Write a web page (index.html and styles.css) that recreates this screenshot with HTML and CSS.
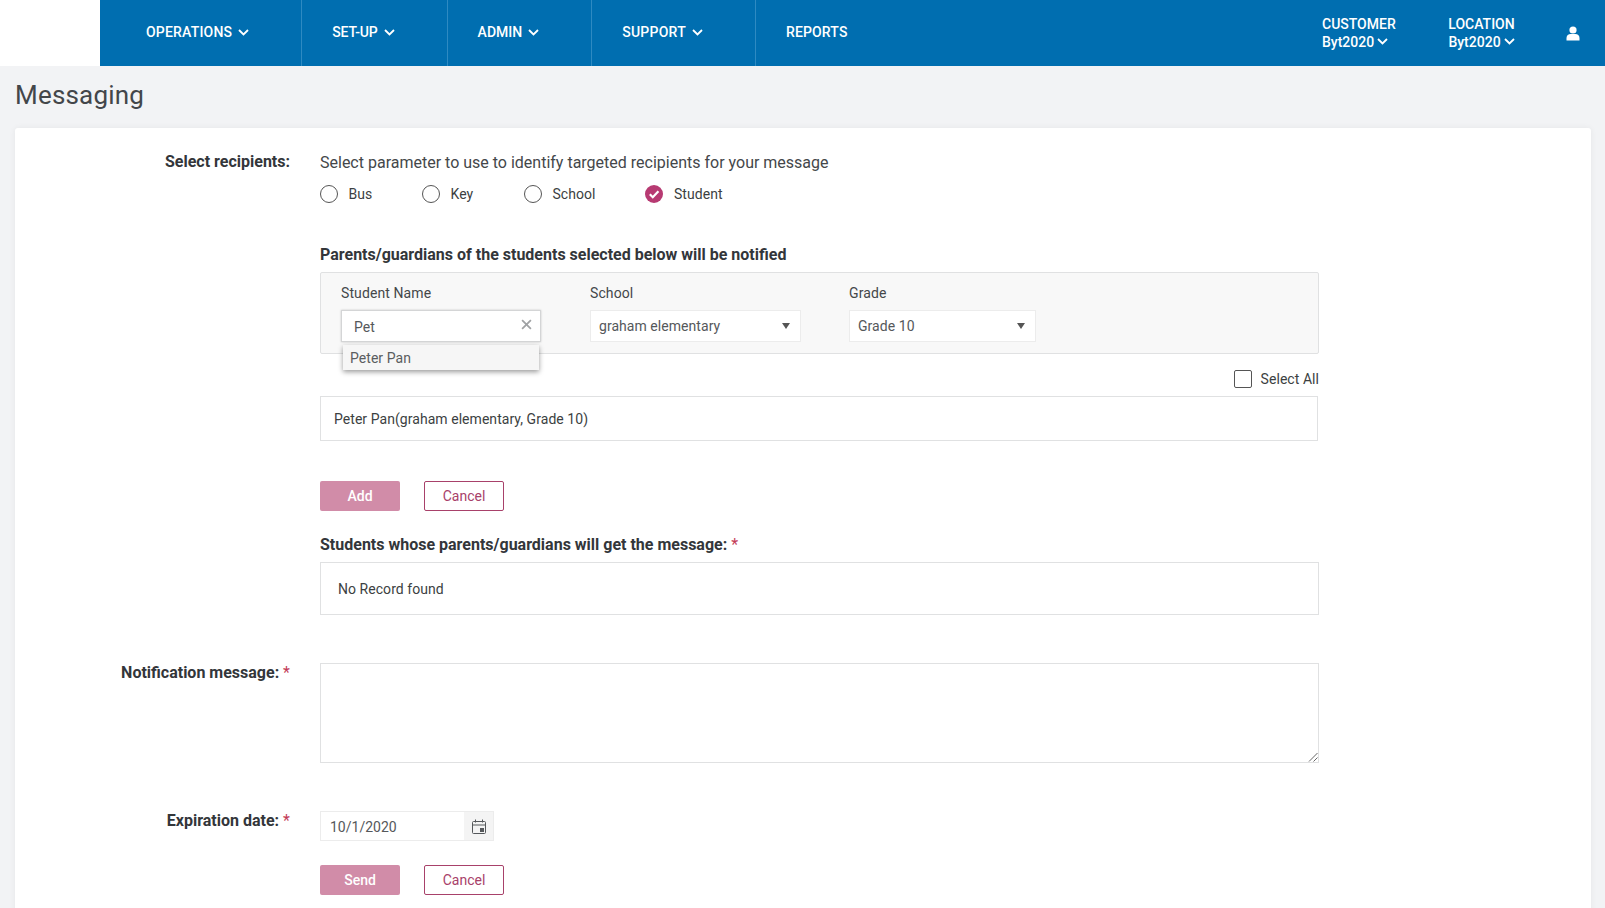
FILE: index.html
```html
<!DOCTYPE html>
<html lang="en">
<head>
<meta charset="utf-8">
<title>Messaging</title>
<link rel="stylesheet" href="styles.css">
</head>
<body>
<header class="topbar">
  <div class="logo"></div>
  <nav class="nav">
    <a class="nav-item nav-first">OPERATIONS<svg class="chev" viewBox="0 0 11 7"><path d="M1 1l4.500 4.500L10 1"/></svg></a>
    <a class="nav-item nav-setup">SET-UP<svg class="chev" viewBox="0 0 11 7"><path d="M1 1l4.500 4.500L10 1"/></svg></a>
    <a class="nav-item">ADMIN<svg class="chev" viewBox="0 0 11 7"><path d="M1 1l4.500 4.500L10 1"/></svg></a>
    <a class="nav-item nav-support">SUPPORT<svg class="chev" viewBox="0 0 11 7"><path d="M1 1l4.500 4.500L10 1"/></svg></a>
    <a class="nav-item nav-last">REPORTS</a>
  </nav>
  <div class="context">
    <div class="ctx ctx-customer"><span>CUSTOMER</span><span class="ctx-val">Byt2020<svg class="chev chev-near" viewBox="0 0 11 7"><path d="M1 1l4.500 4.500L10 1"/></svg></span></div>
    <div class="ctx ctx-location"><span>LOCATION</span><span class="ctx-val">Byt2020<svg class="chev chev-near" viewBox="0 0 11 7"><path d="M1 1l4.500 4.500L10 1"/></svg></span></div>
    <svg class="user" viewBox="0 0 14 15"><circle cx="7" cy="4" r="3.600"/><path d="M0.500 14.500v-2.500c0-2.600 2-4 4-4h5c2 0 4 1.400 4 4v2.500z"/></svg>
  </div>
</header>

<main class="page">
  <h1 class="title">Messaging</h1>
  <section class="card">
    <div class="row row-recipients">
      <div class="label">Select recipients:</div>
      <div class="content">
        <p class="lead">Select parameter to use to identify targeted recipients for your message</p>
        <div class="radios">
          <label class="radio radio-bus"><span class="dot"></span>Bus</label>
          <label class="radio radio-key"><span class="dot"></span>Key</label>
          <label class="radio radio-school"><span class="dot"></span>School</label>
          <label class="radio"><svg class="dot-on" viewBox="0 0 18 18"><circle cx="9" cy="9" r="9"/><path d="M4.800 9.200l3 3L13.400 6.200"/></svg>Student</label>
        </div>
        <h2 class="subhead subhead-parents">Parents/guardians of the students selected below will be notified</h2>
        <div class="filters">
          <div class="field field-name">
            <div class="field-label">Student Name</div>
            <div class="search"><span>Pet</span><svg class="clear" viewBox="0 0 10 10"><path d="M1 1l8 8M9 1l-8 8"/></svg></div>
            <div class="suggest">Peter Pan</div>
          </div>
          <div class="field field-school">
            <div class="field-label">School</div>
            <div class="select"><span>graham elementary</span><i class="caret"></i></div>
          </div>
          <div class="field field-grade">
            <div class="field-label">Grade</div>
            <div class="select"><span>Grade 10</span><i class="caret"></i></div>
          </div>
        </div>
        <div class="select-all"><span class="check"></span>Select All</div>
        <div class="result">Peter Pan(graham elementary, Grade 10)</div>
        <div class="actions actions-add">
          <button class="btn btn-primary">Add</button>
          <button class="btn btn-outline">Cancel</button>
        </div>
        <h2 class="subhead subhead-students">Students whose parents/guardians will get the message: <em class="req">*</em></h2>
        <div class="records">No Record found</div>
      </div>
    </div>
    <div class="row row-notify">
      <div class="label">Notification message: <em class="req">*</em></div>
      <div class="content"><div class="textarea"><svg class="grip" viewBox="0 0 10 10"><path d="M1 9.500L9.500 1M5.500 9.500L9.500 5.500"/></svg></div></div>
    </div>
    <div class="row row-date">
      <div class="label">Expiration date: <em class="req">*</em></div>
      <div class="content">
        <div class="date"><span class="date-val">10/1/2020</span><span class="date-btn"><svg class="cal" viewBox="0 0 14 15"><rect x="0.500" y="2.500" width="13" height="12" rx="1"/><path d="M0.500 6h13M3.500 0.500v3M10.500 0.500v3"/><rect class="cal-fill" x="8.500" y="9.500" width="3" height="3"/></svg></span></div>
        <div class="actions actions-send">
          <button class="btn btn-primary">Send</button>
          <button class="btn btn-outline">Cancel</button>
        </div>
      </div>
    </div>
  </section>
</main>
</body>
</html>
```

FILE: styles.css
```css
* { box-sizing: border-box; }
html, body { margin: 0; height: 908px; overflow: hidden; }
body { background: #f2f3f5; font-family: Roboto, "Liberation Sans", sans-serif; font-size: 14px; letter-spacing: 0.05px; color: #3c3f42; }

.topbar { display: flex; height: 66px; background: #006eb0; color: #fff; }
.logo { width: 100px; background: #fff; }
.nav { display: flex; }
.nav-item { display: flex; align-items: center; padding: 0 52px 2px 30px; border-right: 1px solid #2e8ac2; font-weight: 500; font-size: 14px; letter-spacing: 0; }
.nav-first { padding-left: 46px; letter-spacing: 0.2px; }
.nav-setup { letter-spacing: -0.15px; }
.nav-support { letter-spacing: 0.25px; }
.nav-last { border-right: 0; letter-spacing: 0.15px; }
.chev { width: 11px; height: 7px; margin-left: 6px; fill: none; stroke: #fff; stroke-width: 1.800; }
.chev-near { margin-left: 3px; }

.context { margin-left: auto; display: flex; align-items: center; padding-right: 25px; }
.ctx { display: flex; flex-direction: column; line-height: 18px; font-weight: 500; font-size: 14px; letter-spacing: 0; margin-top: -1px; }
.ctx-customer { width: 127px; }
.ctx-location { align-items: center; width: 65px; margin-right: 52px; }
.ctx-val { display: flex; align-items: center; white-space: nowrap; }
.user { width: 14px; height: 15px; fill: #fff; }

.page { padding: 0 14px 0 15px; }
.title { margin: 0; height: 62px; font-size: 26px; font-weight: 400; line-height: 58px; color: #43464a; letter-spacing: 0.2px; }
.card { background: #fff; border-radius: 3px; box-shadow: 0 0 6px rgba(0,0,0,.06); height: 800px; padding-top: 23px; }

.row { display: grid; grid-template-columns: 275px 999px; column-gap: 30px; }
.label { text-align: right; font-size: 16px; font-weight: 700; color: #33363a; line-height: 20px; letter-spacing: 0; }
.req { font-style: normal; font-weight: 400; color: #c33b57; }
.row-recipients .label { margin-top: 1px; }

.lead { margin: 1px 0 0; font-size: 16px; line-height: 22px; color: #44474a; letter-spacing: 0; }
.radios { display: flex; margin-top: 11px; }
.radio { display: flex; align-items: center; height: 18px; font-size: 14px; }
.radio-bus, .radio-key { width: 102px; }
.radio-school { width: 121px; }
.dot { width: 18px; height: 18px; border: 1px solid #555; border-radius: 50%; margin-right: 10.500px; background: #fff; }
.dot-on { width: 18px; height: 18px; margin-right: 11px; }
.dot-on circle { fill: #b73a72; }
.dot-on path { fill: none; stroke: #fff; stroke-width: 2.200; }

.subhead { margin: 0; font-size: 16px; font-weight: 700; line-height: 20px; color: #33363a; letter-spacing: 0; }
.subhead-parents { margin-top: 42px; }
.subhead-students { margin-top: 24px; }

.filters { display: flex; margin-top: 7px; height: 82px; padding: 10px 20px 0; background: #f8f8f8; border: 1px solid #e0e1e2; border-radius: 2px; }
.field { position: relative; }
.field-name { width: 249px; }
.field-school { width: 259px; }
.field-grade { width: 187px; }
.field-label { font-size: 14px; line-height: 18px; padding-top: 1px; height: 19px; margin-bottom: 8px; color: #44474a; letter-spacing: 0.1px; }
.search { display: flex; align-items: center; justify-content: space-between; width: 200px; height: 32px; padding: 1px 8px 0 12px; background: #fff; border: 1px solid #d4d5d6; box-shadow: 0 0 2px rgba(0,0,0,.2); color: #55585b; }
.clear { width: 11px; height: 11px; margin-top: -4px; fill: none; stroke: #a0a2a4; stroke-width: 1.600; }
.suggest { position: absolute; left: 2px; top: 62px; width: 196px; height: 25px; padding-left: 7px; line-height: 27px; background: #f6f6f6; box-shadow: 0 2px 5px rgba(0,0,0,.4); color: #5a5d60; z-index: 2; }
.field-school .select { width: 211px; }
.select { display: flex; align-items: center; justify-content: space-between; height: 32px; padding: 0 10px 0 8px; background: #fff; border: 1px solid #ececec; color: #55585b; }
.caret { width: 0; height: 0; border-left: 4px solid transparent; border-right: 4px solid transparent; border-top: 6px solid #555; }

.select-all { display: flex; align-items: center; justify-content: flex-end; height: 18px; margin-top: 16px; }
.check { width: 18px; height: 18px; margin-right: 9px; border: 1px solid #555; border-radius: 2px; }
.result { width: 998px; height: 45px; margin-top: 8px; padding-left: 13px; line-height: 45px; border: 1px solid #e0e1e2; color: #3c3f42; }

.actions { display: flex; gap: 24px; }
.actions-add { margin-top: 40px; }
.actions-send { margin-top: 24px; }
.btn { width: 80px; height: 30px; padding: 0; font: 14px Roboto, "Liberation Sans", sans-serif; border-radius: 2px; }
.btn-primary { background: #d18ca8; border: 0; color: #fff; font-weight: 500; }
.btn-outline { background: #fff; border: 1px solid #a8416a; color: #a8416a; }

.records { height: 53px; margin-top: 7px; padding-left: 17px; line-height: 53px; border: 1px solid #e0e1e2; }

.row-notify { margin-top: 48px; }
.textarea { position: relative; height: 100px; border: 1px solid #e0e1e2; }
.grip { position: absolute; right: 0; bottom: 0; width: 10px; height: 10px; fill: none; stroke: #666; stroke-width: 1; }

.row-date { margin-top: 48px; }
.date { display: flex; width: 174px; height: 30px; border: 1px solid #ececec; }
.date-val { flex: 1; padding-left: 9px; line-height: 30px; color: #55585b; letter-spacing: 0; }
.date-btn { display: flex; align-items: center; justify-content: center; width: 29px; background: #f4f4f4; }
.cal { width: 14px; height: 15px; fill: none; stroke: #55585b; stroke-width: 1; }
.cal-fill { fill: #55585b; }
```
